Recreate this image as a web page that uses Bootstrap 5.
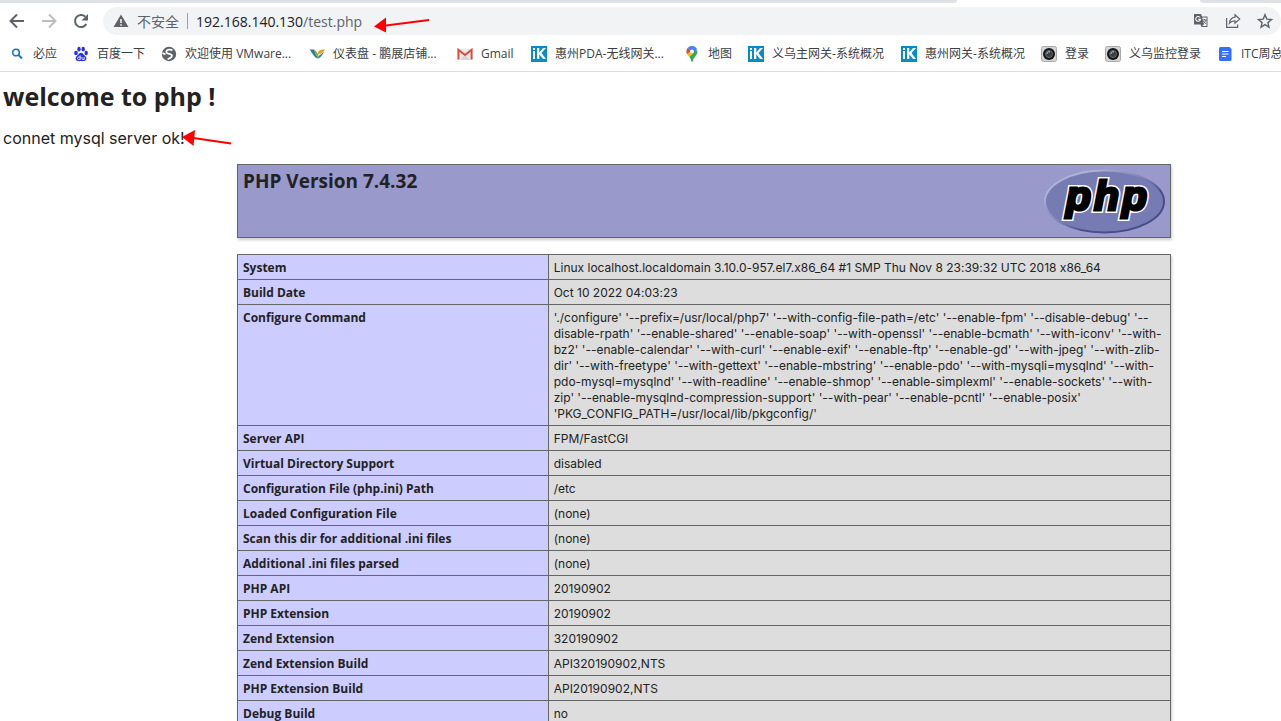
<!DOCTYPE html>
<html lang="zh-CN">
<head>
<meta charset="utf-8">
<meta name="viewport" content="width=device-width, initial-scale=1">
<title>phpinfo()</title>
<link href="https://cdn.jsdelivr.net/npm/bootstrap@5.3.0/dist/css/bootstrap.min.css" rel="stylesheet">
<script src="https://cdn.jsdelivr.net/npm/bootstrap@5.3.0/dist/js/bootstrap.bundle.min.js" defer></script>
<style>
  body { font-family: "Open Sans", "Noto Sans CJK SC", sans-serif; color: #222; background: #fff; overflow: hidden; height: 100vh; }
  .tab-strip { height: 3px; }
  .tab-strip div { background: #dee1e6; }
  .tab-left { flex: 957 1 0; border-bottom-right-radius: 8px; }
  .tab-strip .tab-active { flex: 243 1 0; background: #fff; }
  .tab-right { flex: 81 1 0; border-bottom-left-radius: 8px; }
  .toolbar { height: 36px; padding: 4px 0 4px 9px; }
  .tool-btn { width: 16px; height: 16px; }
  .tool-btn svg, .pill svg, .bookmarks svg { display: block; }
  .pill { height: 28px; border-radius: 14px; background: #f1f3f4; color: #5f6368; font-size: 14px; padding: 0 8px 0 10px; margin-left: 14px; }
  .pill-sep { width: 1px; height: 16px; background: #9aa0a6; }
  .url { color: #5f6368; }
  .url b { font-weight: 400; color: #202124; }
  .bookmarks { height: 33px; padding: 0 0 2px 9px; gap: 16px; border-bottom: 1px solid #dadce0; overflow: hidden; font-size: 12px; }
  .bookmarks a { color: #3c4043; text-decoration: none; white-space: nowrap; gap: 8px; flex-shrink: 0; }
  .bm-short { min-width: 58px; }
  .bm-mid { min-width: 132px; }
  .bm-long { min-width: 137px; }
  .page-body { padding: 8px 3px 0; }
  .welcome { font-size: 25px; line-height: 32px; font-weight: 700; margin: 0 0 16px; }
  .status { font-family: Inter, "Open Sans", sans-serif; font-size: 16px; line-height: 20px; margin: 0 0 16px; }
  .info { max-width: 934px; margin: 0 107px 16px auto; }
  .info-box { border: 1px solid #666; background: #99c; box-shadow: 1px 2px 3px #ccc; height: 74px; padding: 4px 5px; }
  .info-box h2 { font-size: 19px; line-height: 24px; font-weight: 700; margin: 0; }
  .info-table { width: 100%; border-collapse: collapse; box-shadow: 1px 2px 3px #ccc; font-size: 12px; line-height: 16px; table-layout: fixed; }
  .info-table th, .info-table td { border: 1px solid #666; padding: 5px 5px 3px; vertical-align: baseline; }
  .info-table th { width: 33.3%; background: #ccf; font-weight: 700; }
  .info-table td { background: #ddd; font-family: Inter, "Open Sans", sans-serif; font-feature-settings: "calt" 0; }
  .arrow { position: absolute; }
  .arrow-url { left: 374px; top: 16px; }
  .arrow-status { left: 182px; top: 128px; }
</style>
</head>
<body>
<svg width="0" height="0" class="position-absolute" aria-hidden="true">
  <symbol id="ik" viewBox="0 0 16 16"><path fill="#0a8acb" d="M0 0h16v16H0z"/><path fill="#fff" d="M2 2h2v2H2zM2 5h2v8H2zM6 2h2.300v4.500L12 2h3L10.500 7l4.500 6h-3L8.300 8.200V13H6z"/></symbol>
  <symbol id="cam" viewBox="0 0 16 16"><rect x=".5" y=".5" width="15" height="15" rx="2" fill="#d4d4d4" stroke="#aaa"/><circle cx="8" cy="8" r="6" fill="#161616"/><circle cx="8" cy="8" r="3.500" fill="#314148" stroke="#5d6b70"/><path d="M6 8a2 2 0 0 1 3-2" stroke="#a8cbd5" fill="none"/><circle cx="9.500" cy="9" r="1.200" fill="#8c241f"/></symbol>
</svg>

<header>
  <div class="tab-strip d-flex"><div class="tab-left"></div><div class="tab-active"></div><div class="tab-right"></div></div>
  <div class="toolbar d-flex align-items-center">
    <button class="tool-btn btn p-0 border-0" aria-label="后退"><svg width="16" height="16" viewBox="0 0 16 16" fill="none" stroke="#5f6368" stroke-width="2"><path d="M15 8H2M8 1.500 1.500 8 8 14.500"/></svg></button>
    <button class="tool-btn btn p-0 border-0 ms-3" aria-label="前进"><svg width="16" height="16" viewBox="0 0 16 16" fill="none" stroke="#bcbec0" stroke-width="2"><path d="M1 8h13M8 1.500 14.500 8 8 14.500"/></svg></button>
    <button class="tool-btn btn p-0 border-0 ms-3" aria-label="重新加载"><svg width="16" height="16" viewBox="0 0 16 16"><path d="M13.300 11A6 6 0 1 1 12.300 3.800" fill="none" stroke="#5f6368" stroke-width="2"/><path fill="#5f6368" d="M15 1v6.500H8.500z"/></svg></button>
    <div class="pill d-flex align-items-center flex-grow-1">
      <svg width="16" height="16" viewBox="0 0 16 16"><path fill="#5f6368" fill-rule="evenodd" d="M8 1.500 15.500 14H.5zM7.200 6v4h1.600V6zm0 5.200v1.600h1.600v-1.600z"/></svg>
      <span class="ms-2">不安全</span>
      <span class="pill-sep ms-2 me-2"></span>
      <span class="url flex-grow-1"><b>192.168.140.130</b>/test.php</span>
      <button class="btn p-0 border-0" aria-label="翻译"><svg width="16" height="16" viewBox="0 0 16 16"><path fill="#5f6368" d="M1 1h7l1 2.500h5.500V14H8.500l-1-2.500H1z"/><path fill="#f1f3f4" d="M9.300 4.500h4.200V13H9.200l1.600-1.600z"/><path d="M7 4.400a2.400 2.400 0 1 0 .5 2H5.300" fill="none" stroke="#f1f3f4" stroke-width="1.100"/><path d="M9.600 7h3.900M11.500 6v1m1.400 0c-.4 1.700-1.400 2.800-2.600 3.600m0-2.600c.6 1.300 1.500 2.200 2.700 2.700" fill="none" stroke="#5f6368" stroke-width=".9"/></svg></button>
      <button class="btn p-0 border-0 ms-3" aria-label="分享"><svg width="16" height="16" viewBox="0 0 16 16" fill="none" stroke="#5f6368" stroke-width="1.200"><path d="M1.600 5v9.400h11V11.500"/><path d="M10 1.800 14.700 6 10 10.200V7.800c-2.600 0-4.300.7-5.600 2.400.4-3.400 2.300-5.500 5.600-6z"/></svg></button>
      <button class="btn p-0 border-0 ms-3" aria-label="收藏"><svg width="16" height="16" viewBox="0 0 16 16" fill="none" stroke="#5f6368" stroke-width="1.400"><path d="m8 1.700 1.800 4.400 4.700.4-3.600 3.100 1.100 4.600L8 11.700l-4 2.500 1.100-4.600L1.500 6.500l4.700-.4z"/></svg></button>
    </div>
  </div>
  <nav class="bookmarks d-flex align-items-center">
    <a href="#" class="d-flex align-items-center"><svg width="16" height="16" viewBox="0 0 16 16" fill="none" stroke="#1a73c8" stroke-width="1.600"><circle cx="7" cy="6.500" r="3.300"/><path stroke-width="2" d="m9.500 9 3.500 3.500"/></svg>必应</a>
    <a href="#" class="d-flex align-items-center"><svg width="16" height="16" viewBox="0 0 16 16"><g fill="#2932e1"><ellipse cx="3" cy="7" rx="1.800" ry="2.300"/><ellipse cx="6" cy="3.200" rx="1.700" ry="2.400"/><ellipse cx="10.200" cy="3.200" rx="1.700" ry="2.400"/><ellipse cx="13.200" cy="7" rx="1.700" ry="2.300"/><path d="M8 6.800c1.500 0 2.200 1.400 3.400 2.500 1.700 1.500 2.300 2.700 1.900 4-.6 2.200-3 1.800-5.300 1.800s-4.700.4-5.300-1.800c-.4-1.300.2-2.500 1.900-4C5.800 8.200 6.500 6.800 8 6.800z"/></g><path d="M7.200 9.500v4H5.500c-1.300 0-1.300-2.400 0-2.400h1.700M9 11v1.500c0 1 .5 1 1 1h1.200V11" fill="none" stroke="#fff" stroke-width=".9"/></svg>百度一下</a>
    <a href="#" class="bm-mid d-flex align-items-center"><svg width="16" height="16" viewBox="0 0 16 16"><circle cx="8" cy="8" r="7.200" fill="#5f6368"/><path d="M11.500 4.300C9.500 3.300 6.500 3.500 5.600 4.800c-1 1.700.6 2.600 2.600 3 2 .5 3.500 1.200 2.400 2.900-.8 1.300-2.500 2-4 2.600M1.500 7l3 1.500" fill="none" stroke="#fff" stroke-width="1.700"/></svg>欢迎使用 VMware...</a>
    <a href="#" class="bm-mid d-flex align-items-center"><svg width="16" height="16" viewBox="0 0 16 16"><path fill="#2a7f91" d="M.5 3.500h4.700c.5 3 2 6 4.300 9C5 12.200 3.300 6.500.5 3.500z"/><path fill="#87ad3a" d="M5.200 3.500C7 4.500 8.200 6.500 9.300 8.800L9.500 12.500C7.200 9.500 5.700 6.500 5.200 3.500z"/><path fill="#e2a333" d="M8.800 6C10.500 4 12.500 3.500 16 3.500c-1 1.500-2 3-4 4l-2.700 1.300z"/><path fill="#2a8c79" d="M15 5.500c-1.200 3-2.700 5.500-5.500 7l-.3-2.200c2-1.200 3.500-2.500 5.800-4.800z"/></svg>仪表盘 - 鹏展店铺...</a>
    <a href="#" class="bm-short d-flex align-items-center"><svg width="16" height="16" viewBox="0 0 16 16"><path fill="#e9e9e9" d="M1 3h14v11H1z"/><path fill="#d5d5d5" d="m3 14 5-5 5 5z"/><path d="M1.400 13.500V3.800L8 9l6.600-5.200v9.700" fill="none" stroke="#d84b3e" stroke-width="2"/></svg>Gmail</a>
    <a href="#" class="bm-long d-flex align-items-center"><svg width="16" height="16"><use href="#ik"/></svg>惠州PDA-无线网关...</a>
    <a href="#" class="d-flex align-items-center"><svg width="16" height="16" viewBox="0 0 16 16"><path fill="#34a853" d="M13.500 5.500c0 4-4 5-4.700 10H7.200c-.2-2-1-3.500-2-4.700L11.500 3z"/><path fill="#fbbc04" d="m2.900 7.600 3.400-3.300 3.200 3-4.200 3.800C4.300 10 3.300 9 2.900 7.600z"/><path fill="#ea4335" d="M3.700 2 7 4.800 2.900 7.900C2 6 2.400 3.500 3.700 2z"/><path fill="#4285f4" d="M3.700 2A5.500 5.500 0 0 1 13 3.300L9.500 7 6.300 4.500z"/><circle cx="8" cy="5.500" r="2" fill="#fff"/></svg>地图</a>
    <a href="#" class="bm-long d-flex align-items-center"><svg width="16" height="16"><use href="#ik"/></svg>义乌主网关-系统概况</a>
    <a href="#" class="d-flex align-items-center"><svg width="16" height="16"><use href="#ik"/></svg>惠州网关-系统概况</a>
    <a href="#" class="d-flex align-items-center"><svg width="16" height="16"><use href="#cam"/></svg>登录</a>
    <a href="#" class="d-flex align-items-center"><svg width="16" height="16"><use href="#cam"/></svg>义乌监控登录</a>
    <a href="#" class="d-flex align-items-center"><svg width="16" height="16" viewBox="0 0 16 16"><path fill="#3370ff" d="M3.500 1h9l2 2v10.500a1.500 1.500 0 0 1-1.500 1.500H3.500A1.500 1.500 0 0 1 2 13.500v-11A1.500 1.500 0 0 1 3.500 1z"/><path d="M5 5.500h6.500M5 8h6.500M5 10.500h4" stroke="#fff" stroke-width="1.100"/></svg>ITC周总</a>
  </nav>
</header>

<main class="page-body">
  <h1 class="welcome">welcome to php !</h1>
  <p class="status">connet mysql server ok!</p>
  <div class="info info-box d-flex justify-content-between">
    <h2>PHP Version 7.4.32</h2>
    <svg width="121" height="65" viewBox="0 0 121 65" role="img" aria-label="PHP logo">
      <defs>
        <linearGradient id="rim" x1="0" y1="0" x2="1" y2="1"><stop offset=".2" stop-color="#aeb2d5"/><stop offset=".5" stop-color="#777bb3"/><stop offset=".65" stop-color="#484c89"/></linearGradient>
      </defs>
      <ellipse cx="60.500" cy="32.500" rx="59.500" ry="31" fill="#777bb3" stroke="url(#rim)" stroke-width="2"/>
      <g font-family="Liberation Sans" font-weight="700" font-style="italic" font-size="41" stroke-linejoin="miter">
        <g fill="#fff" stroke="#fff" stroke-width="6"><text x="22" y="41">p</text><text x="50" y="41">h</text><text x="78" y="41">p</text></g>
        <g fill="#000" stroke="#000" stroke-width="3"><text x="22" y="41">p</text><text x="50" y="41">h</text><text x="78" y="41">p</text></g>
      </g>
    </svg>
  </div>
  <div class="info">
    <table class="info-table">
      <tbody>
        <tr><th scope="row">System</th><td>Linux localhost.localdomain 3.10.0-957.el7.x86_64 #1 SMP Thu Nov 8 23:39:32 UTC 2018 x86_64</td></tr>
        <tr><th scope="row">Build Date</th><td>Oct 10 2022 04:03:23</td></tr>
        <tr><th scope="row">Configure Command</th><td>'./configure' '--prefix=/usr/local/php7' '--with-config-file-path=/etc' '--enable-fpm' '--disable-debug' '--<br>disable-rpath' '--enable-shared' '--enable-soap' '--with-openssl' '--enable-bcmath' '--with-iconv' '--with-<br>bz2' '--enable-calendar' '--with-curl' '--enable-exif' '--enable-ftp' '--enable-gd' '--with-jpeg' '--with-zlib-<br>dir' '--with-freetype' '--with-gettext' '--enable-mbstring' '--enable-pdo' '--with-mysqli=mysqlnd' '--with-<br>pdo-mysql=mysqlnd' '--with-readline' '--enable-shmop' '--enable-simplexml' '--enable-sockets' '--with-<br>zip' '--enable-mysqlnd-compression-support' '--with-pear' '--enable-pcntl' '--enable-posix'<br>'PKG_CONFIG_PATH=/usr/local/lib/pkgconfig/'</td></tr>
        <tr><th scope="row">Server API</th><td>FPM/FastCGI</td></tr>
        <tr><th scope="row">Virtual Directory Support</th><td>disabled</td></tr>
        <tr><th scope="row">Configuration File (php.ini) Path</th><td>/etc</td></tr>
        <tr><th scope="row">Loaded Configuration File</th><td>(none)</td></tr>
        <tr><th scope="row">Scan this dir for additional .ini files</th><td>(none)</td></tr>
        <tr><th scope="row">Additional .ini files parsed</th><td>(none)</td></tr>
        <tr><th scope="row">PHP API</th><td>20190902</td></tr>
        <tr><th scope="row">PHP Extension</th><td>20190902</td></tr>
        <tr><th scope="row">Zend Extension</th><td>320190902</td></tr>
        <tr><th scope="row">Zend Extension Build</th><td>API320190902,NTS</td></tr>
        <tr><th scope="row">PHP Extension Build</th><td>API20190902,NTS</td></tr>
        <tr><th scope="row">Debug Build</th><td>no</td></tr>
      </tbody>
    </table>
  </div>
</main>

<svg class="arrow arrow-url" width="56" height="20" viewBox="0 0 56 20" aria-hidden="true"><path d="M8 10 55 4" stroke="#f00" stroke-width="2"/><path fill="#f00" d="M0 10.500 12 1.500v15z"/></svg>
<svg class="arrow arrow-status" width="50" height="20" viewBox="0 0 50 20" aria-hidden="true"><path d="m8 9.500 41 6" stroke="#f00" stroke-width="2"/><path fill="#f00" d="M0 9 13 2l-1.500 16z"/></svg>
</body>
</html>
